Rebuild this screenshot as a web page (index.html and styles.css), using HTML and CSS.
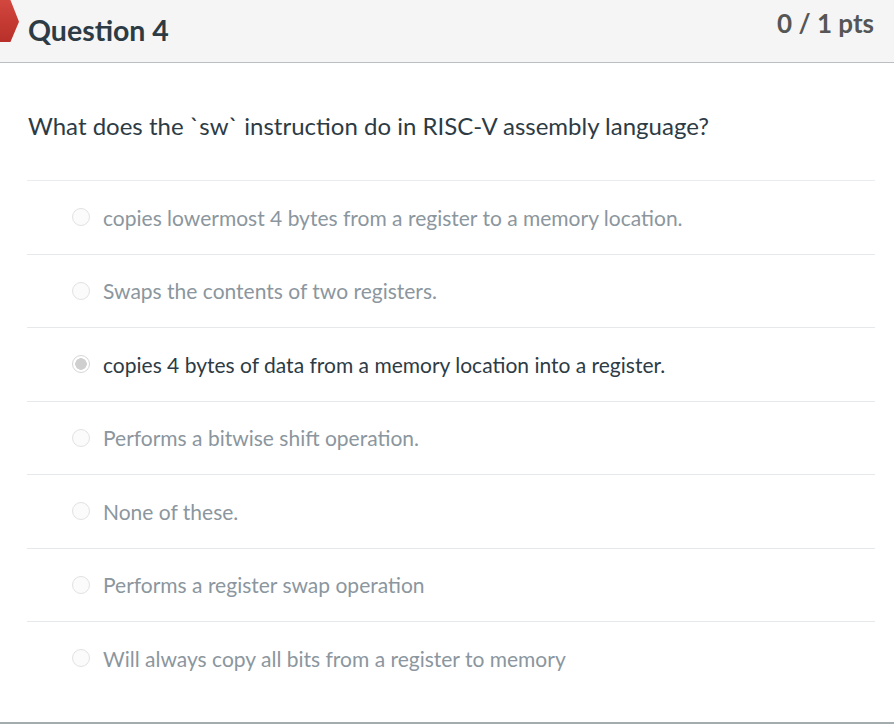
FILE: index.html
```html
<!DOCTYPE html>
<html>
<head>
<meta charset="utf-8">
<link rel="stylesheet" href="styles.css">
</head>
<body>
<div class="question">
  <div class="header">
    <span class="flag"></span>
    <h2 class="title">Question 4</h2>
    <div class="pts">0 / 1 pts</div>
  </div>
  <div class="content">
    <p class="prompt">What does the `sw` instruction do in RISC-V assembly language?</p>
    <ul class="answers">
      <li class="answer"><span class="radio"></span><span class="label">copies lowermost 4 bytes from a register to a memory location.</span></li>
      <li class="answer"><span class="radio"></span><span class="label">Swaps the contents of two registers.</span></li>
      <li class="answer selected"><span class="radio"></span><span class="label">copies 4 bytes of data from a memory location into a register.</span></li>
      <li class="answer"><span class="radio"></span><span class="label">Performs a bitwise shift operation.</span></li>
      <li class="answer"><span class="radio"></span><span class="label">None of these.</span></li>
      <li class="answer"><span class="radio"></span><span class="label">Performs a register swap operation</span></li>
      <li class="answer"><span class="radio"></span><span class="label">Will always copy all bits from a register to memory</span></li>
    </ul>
  </div>
</div>
</body>
</html>
```
FILE: styles.css
```css
html, body {
  margin: 0;
  padding: 0;
  background: #ffffff;
  font-family: Lato, "Open Sans", sans-serif;
}
.question {
  width: 894px;
  border-bottom: 2px solid #a5acb0;
  height: 722px;
  box-sizing: content-box;
}
.header {
  position: relative;
  height: 62px;
  background: #f5f5f5;
  border-bottom: 1px solid #b9bfc3;
  display: flex;
  justify-content: space-between;
  align-items: flex-start;
  padding: 0 20px 0 28px;
}
.flag {
  position: absolute;
  left: 0;
  top: 0;
  width: 19px;
  height: 42px;
  background: linear-gradient(180deg, #d2473e, #b8302a);
  clip-path: polygon(0 0, 55% 0, 100% 52%, 55% 100%, 0 100%);
}
.title {
  margin: 0;
  padding-top: 12px;
  font-size: 28.5px;
  line-height: 36px;
  font-weight: 700;
  color: #2d3b45;
}
.pts {
  padding-top: 6px;
  font-size: 26px;
  line-height: 34px;
  font-weight: 700;
  color: #565656;
}
.content {
  padding: 0 19px 0 27px;
}
.prompt {
  margin: 0;
  padding: 47px 0 0 1px;
  height: 70px;
  font-size: 24px;
  line-height: 32px;
  color: #2d3b45;
  border-bottom: 1px solid #e9ecee;
}
.answers {
  list-style: none;
  margin: 0;
  padding: 0;
}
.answer {
  display: flex;
  align-items: center;
  height: 72.5px;
  padding-left: 45px;
  border-bottom: 1px solid #e6e9eb;
  font-size: 21px;
  color: #8b969e;
}
.answer:last-child {
  border-bottom: none;
}
.radio {
  width: 16px;
  height: 16px;
  border-radius: 50%;
  border: 1px solid #e2e2e2;
  background: #fbfbfb;
  margin-right: 13px;
  box-sizing: content-box;
  flex: none;
}
.selected {
  color: #2d3b45;
}
.selected .radio {
  border: 1px solid #d6d6d6;
  background: radial-gradient(circle, #cfcfcf 0 5.5px, #ffffff 6px);
}
```
